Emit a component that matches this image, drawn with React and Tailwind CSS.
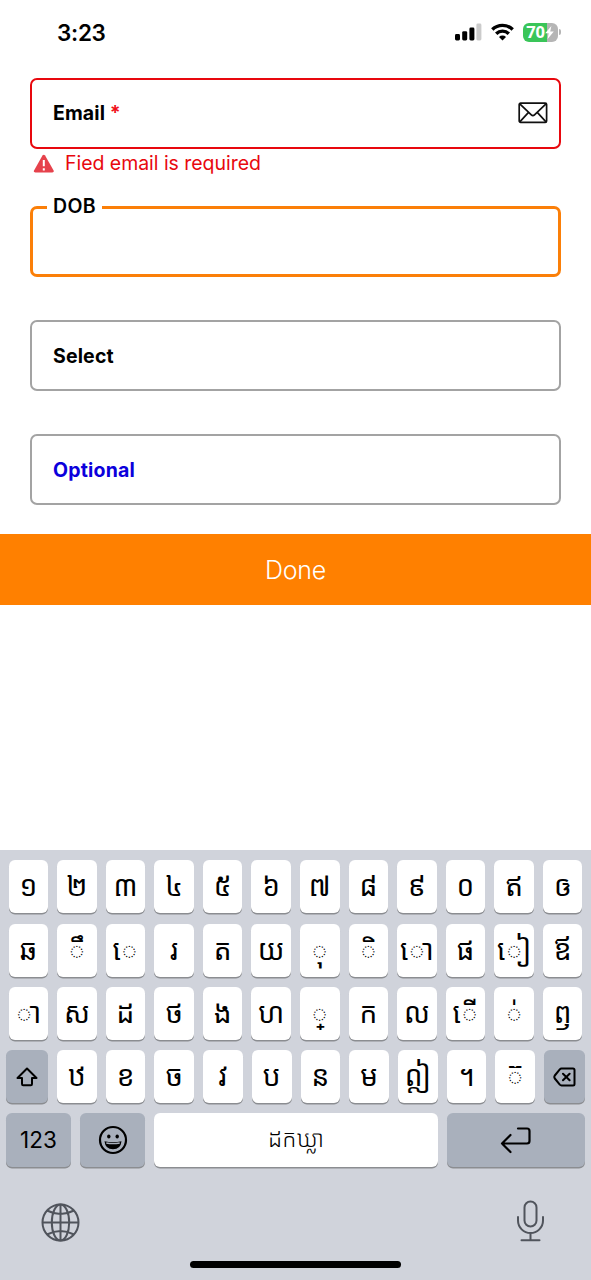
const digits = ['១', '២', '៣', '៤', '៥', '៦', '៧', '៨', '៩', '០', 'ឥ', 'ឲ'];
const rowTwo = ['ឆ', '◌ឹ', '◌េ', 'រ', 'ត', 'យ', '◌ុ', '◌ិ', '◌ោ', 'ផ', '◌ៀ', 'ឪ'];
const rowThree = ['◌ា', 'ស', 'ដ', 'ថ', 'ង', 'ហ', '◌្', 'ក', 'ល', '◌ើ', '◌់', 'ឭ'];
const rowFour = ['ឋ', 'ខ', 'ច', 'វ', 'ប', 'ន', 'ម', 'ឦ', '។', '◌៊'];

function Key({ children }) {
  return (
    <div className="flex h-full min-w-0 flex-1 items-center justify-center rounded-[6px] bg-white pb-[3px] text-[28px] leading-none whitespace-nowrap shadow-[0_1.5px_0_#8b8d91]">
      {children}
    </div>
  );
}

function ModKey({ children, className }) {
  return (
    <div className={`flex h-full items-center justify-center rounded-[6px] bg-[#a9b0bc] shadow-[0_1.5px_0_#8b8d91] ${className}`}>
      {children}
    </div>
  );
}

function StatusBar() {
  return (
    <header className="flex h-[78px] items-start justify-between pt-[21px] pr-[30px] pl-[57px]">
      <span className="text-[22.5px] leading-[24px] font-semibold tracking-[-0.3px]">3:23</span>
      <div className="flex h-[22px] items-center">
        <svg width="27" height="18" viewBox="0 0 27 18">
          <rect x="0" y="11" width="5" height="6.5" rx="1.4" />
          <rect x="7.2" y="8.2" width="5" height="9.3" rx="1.4" />
          <rect x="14.4" y="4.5" width="5" height="13" rx="1.4" />
          <rect x="21.4" y="0.6" width="5" height="16.9" rx="1.4" fill="#cbcbcb" />
        </svg>
        <svg className="ml-[9px]" width="23" height="18" viewBox="0 0 23 18" fill="none" stroke="#000" strokeWidth="3.4">
          <path d="M1.3 6.5a14.6 14.6 0 0 1 20.4 0" />
          <path d="M5.2 10.7a9 9 0 0 1 12.6 0" />
          <path d="M11.5 17.4 8 13.9a5 5 0 0 1 7 0Z" fill="#000" stroke="none" />
        </svg>
        <div className="ml-[9px] flex h-[19px] w-[35px] items-center justify-center rounded-[6px] bg-linear-to-r from-[#3ac559] from-70% to-[#b5b5b5] to-70%">
          <span className="font-['Open_Sans',sans-serif] text-[16.5px] leading-none font-bold tracking-[-0.3px] text-white">70</span>
          <svg width="9" height="13" viewBox="0 0 9 13" fill="#fff">
            <path d="M6.4 0 .2 7.2h3.5L2.6 13 8.8 5.6H5.2Z" />
          </svg>
        </div>
        <div className="ml-[1.5px] h-[6px] w-[2px] rounded-r-full bg-[#b5b5b5]" />
      </div>
    </header>
  );
}

function Form() {
  return (
    <main className="h-[772px]">
      <div className="px-[30px]">
        <div className="flex h-[71px] items-center justify-between rounded-[7px] border-2 border-[#e8080e] pr-[11px] pb-px pl-[21px]">
          <span className="pt-px text-[19.5px] font-bold tracking-[0.1px]">
            Email <span className="text-[#f01018]">*</span>
          </span>
          <svg width="30" height="22" viewBox="0 0 30 22" fill="none" stroke="#111" strokeWidth="1.7" strokeLinejoin="round">
            <rect x="1.2" y="1.2" width="27.4" height="19.2" rx="1.4" />
            <path d="m1.8 1.8 11.5 11.1q1.6 1.5 3.2 0L28 1.8M1.8 19.9l8.5-9.2M28 19.9l-8.5-9.2" />
          </svg>
        </div>
        <div className="flex h-[29px] items-center pl-[3px] text-[#e8080e]">
          <svg width="22" height="20" viewBox="0 0 22 20">
            <path d="M9.5 1.6q1.3-1.8 2.6 0l8.5 14.8q.8 2-1.3 2.2H2.3Q.2 18.400 1 16.400Z" fill="#e6424c" />
            <path d="M10.800 6v6.300M10.800 14.300v2.200" stroke="#fff" strokeWidth="2" />
          </svg>
          <span className="ml-[10px] text-[19.5px] leading-none tracking-[-0.040px]">Fied email is required</span>
        </div>
        <fieldset className="mt-[17px] h-[82px] rounded-[7px] border-[3px] border-[#fb7f08] pl-[14px]">
          <legend className="px-[6px] pb-[2px] text-[19.500px] leading-[22px] font-semibold tracking-[0.400px]">DOB</legend>
        </fieldset>
        <div className="mt-[43px] flex h-[71px] items-center rounded-[7px] border-2 border-[#a3a3a3] pt-[2px] pl-[21px] text-[19.500px] font-bold tracking-[0.150px]">Select</div>
        <div className="mt-[43px] flex h-[71px] items-center rounded-[7px] border-2 border-[#a3a3a3] pt-[2px] pl-[21px] text-[19.500px] font-bold tracking-[0.200px] text-[#0b00dc]">Optional</div>
      </div>
      <button className="mt-[29px] flex h-[71px] w-full items-center justify-center bg-[#ff8000] pt-[2px] text-[25px] font-light tracking-[-0.200px] text-white">Done</button>
    </main>
  );
}

function KeyRow({ keys }) {
  return (
    <div className="flex h-[53px] gap-[9px] px-[8.500px]">
      {keys.map((k) => (
        <Key key={k}>{k}</Key>
      ))}
    </div>
  );
}

function Keyboard() {
  return (
    <footer className="h-[430px] bg-[#d0d3db] pt-[10px] font-['Noto_Sans_Khmer','Khmer_OS','Inter',sans-serif]">
      <div className="flex flex-col gap-[10px]">
        <div className="mb-[1px]"><KeyRow keys={digits} /></div>
        <KeyRow keys={rowTwo} />
        <KeyRow keys={rowThree} />
        <div className="flex h-[53px] gap-[9px] px-[6px]">
          <ModKey className="w-[42px]">
            <svg width="22" height="20" viewBox="0 0 22 20" fill="none" stroke="#000" strokeWidth="2" strokeLinejoin="round">
              <path d="M11 1.5 1.500 11H6v6q0 1.200 1.200 1.200h7.600q1.200 0 1.200-1.200v-6h4.500Z" />
            </svg>
          </ModKey>
          {rowFour.map((k) => (
            <Key key={k}>{k}</Key>
          ))}
          <ModKey className="w-[41px]">
            <svg width="23" height="20" viewBox="0 0 23 20" fill="none" stroke="#000" strokeWidth="2" strokeLinejoin="round" strokeLinecap="round">
              <path d="M8.500 1.500H20q1.500 0 1.500 1.500v14q0 1.500-1.500 1.500H8.500Q7.500 18.500 6.800 17.700L1.800 11.500q-1-1.500 0-3L6.800 2.300Q7.500 1.500 8.500 1.500ZM10 6.700l6.600 6.600M16.600 6.700l-6.600 6.600" />
            </svg>
          </ModKey>
        </div>
        <div className="flex h-[54px] gap-[9px] px-[6px]">
          <ModKey className="w-[65px] font-['Inter'] text-[22.500px]">123</ModKey>
          <ModKey className="w-[65px]">
            <svg width="30" height="30" viewBox="0 0 30 30">
              <circle cx="15" cy="15" r="13" fill="none" stroke="#000" strokeWidth="2.200" />
              <ellipse cx="10.800" cy="11.500" rx="1.700" ry="2" />
              <ellipse cx="19.200" cy="11.500" rx="1.700" ry="2" />
              <path d="M6.500 16.200q8.500 2 17 0-.8 8-8.500 8t-8.500-8Z" />
              <path d="M8.300 18q6.700 1.300 13.400 0" stroke="#a9b0bc" strokeWidth="1.300" fill="none" />
            </svg>
          </ModKey>
          <div className="flex h-full flex-1 items-center justify-center rounded-[6px] bg-white pb-[3px] text-[23px] leading-none font-light shadow-[0_1.5px_0_#8b8d91]">ដកឃ្លា</div>
          <ModKey className="w-[138px]">
            <svg width="32" height="28" viewBox="0 0 32 28" fill="none" stroke="#000" strokeWidth="2.200" strokeLinecap="round" strokeLinejoin="round">
              <path d="M18 2.500h9q2.500 0 2.500 2.500v10q0 2.500-2.500 2.500H2M10.500 9 2 17.500l8.500 8.500" />
            </svg>
          </ModKey>
        </div>
      </div>
      <div className="mt-[33px] flex items-center justify-between pr-[46px] pl-[41px]">
        <svg width="39" height="42" viewBox="0 0 39 42" fill="none" stroke="#50545c" strokeWidth="2">
          <circle cx="19.500" cy="22.500" r="18" />
          <ellipse cx="19.500" cy="22.500" rx="8.700" ry="18" />
          <path d="M19.500 4.500v36M1.500 22.500h36M6 10.500q13.500 7 27 0M6 34.500q13.500-7 27 0" />
        </svg>
        <svg width="29" height="42" viewBox="0 0 29 42" fill="none" stroke="#50545c" strokeWidth="2" strokeLinecap="round">
          <rect x="8.500" y="1.500" width="12" height="25" rx="6" />
          <path d="M2 17v3.500a12.500 12.500 0 0 0 25 0V17M14.500 33v7M5.500 40.300h18" />
        </svg>
      </div>
      <div className="mx-auto mt-[19px] h-[7px] w-[211px] rounded-full bg-black" />
    </footer>
  );
}

export default function App() {
  return (
    <div className="h-[1280px] w-[591px] overflow-hidden bg-white font-['Inter',sans-serif] text-black">
      <StatusBar />
      <Form />
      <Keyboard />
    </div>
  );
}
